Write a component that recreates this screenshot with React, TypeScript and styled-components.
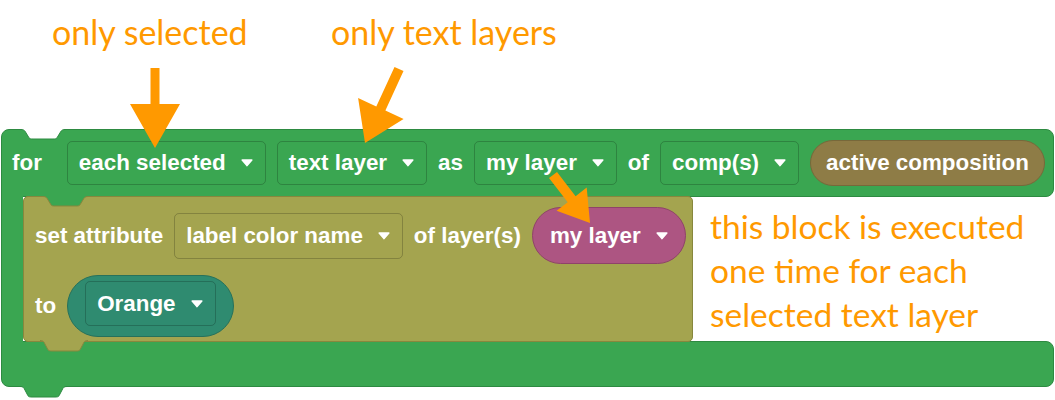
import React from 'react';
import styled, { createGlobalStyle } from 'styled-components';

const C = {
  green: '#3aa651',
  greenEdge: '#2d8a41',
  olive: '#a4a44f',
  oliveEdge: '#87873d',
  brown: '#8e7c46',
  brownEdge: '#77683a',
  pink: '#ad5582',
  pinkEdge: '#8f4369',
  teal: '#2f8b70',
  tealEdge: '#27715b',
  orange: '#ff9900',
};

const Global = createGlobalStyle`
  html, body { margin: 0; padding: 0; background: #ffffff; }
  * { box-sizing: border-box; }
`;

const Canvas = styled.div`
  position: relative;
  width: 1055px;
  height: 400px;
  overflow: hidden;
  background: #ffffff;
`;

const CalloutRow = styled.div`
  display: flex;
  height: 129px;
  padding: 10px 0 0 52px;
`;

const Callout = styled.div<{ $w?: number }>`
  width: ${(p) => (p.$w ? `${p.$w}px` : 'auto')};
  font-family: Lato, 'Open Sans', sans-serif;
  font-size: 34px;
  line-height: 44px;
  color: ${C.orange};
  white-space: nowrap;
`;

const ForBlock = styled.div`
  display: flex;
  flex-direction: column;
  width: 1053px;
  margin-left: 1px;
`;

const TopRow = styled.div`
  position: relative;
  z-index: 1;
  height: 68px;
  display: flex;
  align-items: center;
  gap: 11px;
  padding-left: 10px;
  background: ${C.green};
  border: 1px solid ${C.greenEdge};
  border-radius: 8px 8px 8px 0;
`;

const Middle = styled.div`
  position: relative;
  z-index: 2;
  display: flex;
  height: 146px;
  margin: -1px 0;
`;

const Spine = styled.div`
  width: 22px;
  background: ${C.green};
  border-left: 1px solid ${C.greenEdge};
`;

const StatementBlock = styled.div`
  position: relative;
  width: 670px;
  display: flex;
  flex-direction: column;
  gap: 11px;
  padding: 10px 0 4px 11px;
  background: ${C.olive};
  border: 1px solid ${C.oliveEdge};
  border-radius: 5px;
`;

const StatementRow = styled.div<{ $h: number }>`
  display: flex;
  align-items: center;
  gap: 11px;
  height: ${(p) => p.$h}px;
`;

const Note = styled.div`
  margin-left: 17px;
  padding-top: 8px;
  font-family: Lato, 'Open Sans', sans-serif;
  font-size: 33.5px;
  line-height: 44px;
  color: ${C.orange};
  white-space: nowrap;
`;

const BottomArm = styled.div`
  position: relative;
  z-index: 1;
  height: 46px;
  background: ${C.green};
  border: 1px solid ${C.greenEdge};
  border-radius: 0 8px 8px 8px;
`;

const Label = styled.span<{ $after?: number }>`
  font-family: 'Liberation Sans', Arial, sans-serif;
  font-weight: 700;
  font-size: 22.4px;
  color: #ffffff;
  white-space: nowrap;
  margin-right: ${(p) => p.$after ?? 0}px;
`;

const Field = styled.div<{ $h?: number }>`
  display: inline-flex;
  align-items: center;
  gap: 15px;
  height: ${(p) => p.$h ?? 44}px;
  padding: 0 12px 0 11px;
  border: 1px solid rgba(0, 0, 0, 0.2);
  border-radius: 5px;
`;

const Pill = styled.div<{ $bg: string; $edge: string; $h: number; $pad?: string }>`
  display: inline-flex;
  align-items: center;
  gap: 15px;
  height: ${(p) => p.$h}px;
  padding: ${(p) => p.$pad ?? '0 16px'};
  background: ${(p) => p.$bg};
  border: 1px solid ${(p) => p.$edge};
  border-radius: 999px;
`;

const Notch = styled.svg<{ $left: number; $top?: number; $bottom?: number }>`
  position: absolute;
  left: ${(p) => p.$left}px;
  ${(p) => (p.$top !== undefined ? `top: ${p.$top}px;` : '')}
  ${(p) => (p.$bottom !== undefined ? `bottom: ${p.$bottom}px;` : '')}
  overflow: visible;
`;

const Overlay = styled.svg`
  position: absolute;
  left: 0;
  top: 0;
  pointer-events: none;
  z-index: 5;
`;

const Caret = () => (
  <svg width="12" height="8" viewBox="0 0 12 8">
    <path d="M1.2 1 H10.8 L6 6.6 Z" fill="#fff" stroke="#fff" strokeWidth="1.6" strokeLinejoin="round" />
  </svg>
);

const Dropdown = ({ text, h }: { text: string; h?: number }) => (
  <Field $h={h}>
    <Label>{text}</Label>
    <Caret />
  </Field>
);

/* tab shape: width w, depth d, top edge at y=0 */
const tabPath = (w: number, d: number) => {
  const s = 10;
  return `M0 0.5 C2 0.5 3 1 4 2.2 L${s - 2} ${d - 1.2} C${s - 1} ${d} ${s} ${d} ${s + 2} ${d} L${w - s - 2} ${d} C${w - s} ${d} ${w - s + 1} ${d} ${w - s + 2} ${d - 1.2} L${w - 4} 2.2 C${w - 3} 1 ${w - 2} 0.5 ${w} 0.5`;
};

const Tab = ({ left, top, bottom, w, d, fill, stroke }: { left: number; top?: number; bottom?: number; w: number; d: number; fill: string; stroke: string }) => (
  <Notch $left={left} $top={top} $bottom={bottom} width={w} height={d + 1} viewBox={`0 0 ${w} ${d + 1}`}>
    <path d={`${tabPath(w, d)} L${w} 0 L0 0 Z`} fill={fill} />
    <path d={tabPath(w, d)} fill="none" stroke={stroke} strokeWidth="1" />
  </Notch>
);

type Pt = [number, number];
const arrow = (a: Pt, b: Pt, shaft: number, headLen: number, headW: number) => {
  const [x1, y1] = a;
  const [x2, y2] = b;
  const dx = x2 - x1;
  const dy = y2 - y1;
  const L = Math.hypot(dx, dy);
  const ux = dx / L;
  const uy = dy / L;
  const px = -uy;
  const py = ux;
  const bx = x2 - ux * headLen;
  const by = y2 - uy * headLen;
  const s = shaft / 2;
  const h = headW / 2;
  const pts: Pt[] = [
    [x1 + px * s, y1 + py * s],
    [bx + px * s, by + py * s],
    [bx + px * h, by + py * h],
    [x2, y2],
    [bx - px * h, by - py * h],
    [bx - px * s, by - py * s],
    [x1 - px * s, y1 - py * s],
  ];
  return pts.map((p) => `${p[0].toFixed(1)},${p[1].toFixed(1)}`).join(' ');
};

const arrows = [
  arrow([155, 68], [155, 148], 9, 44, 50),
  arrow([399, 69], [365, 143], 10, 38, 50),
  arrow([553, 175], [590, 223], 10, 30, 38),
];

export default function App() {
  return (
    <Canvas>
      <Global />
      <CalloutRow>
        <Callout $w={279}>only selected</Callout>
        <Callout>only text layers</Callout>
      </CalloutRow>

      <ForBlock>
        <TopRow>
          <Tab left={19} top={-1} w={44} d={10} fill="#ffffff" stroke={C.greenEdge} />
          <Label $after={14}>for</Label>
          <Dropdown text="each selected" />
          <Dropdown text="text layer" />
          <Label>as</Label>
          <Dropdown text="my layer" />
          <Label>of</Label>
          <Dropdown text="comp(s)" />
          <Pill $bg={C.brown} $edge={C.brownEdge} $h={46} $pad="0 15px">
            <Label>active composition</Label>
          </Pill>
        </TopRow>

        <Middle>
          <Spine />
          <StatementBlock>
            <Tab left={19} top={-1} w={45} d={10} fill={C.green} stroke={C.oliveEdge} />
            <StatementRow $h={57}>
              <Label>set attribute</Label>
              <Dropdown text="label color name" h={46} />
              <Label>of layer(s)</Label>
              <Pill $bg={C.pink} $edge={C.pinkEdge} $h={57} $pad="0 17px">
                <Label>my layer</Label>
                <Caret />
              </Pill>
            </StatementRow>
            <StatementRow $h={62}>
              <Label>to</Label>
              <Pill $bg={C.teal} $edge={C.tealEdge} $h={62} $pad="5px 17px 10px">
                <Dropdown text="Orange" h={45} />
              </Pill>
            </StatementRow>
            <Tab left={16} bottom={-11} w={48} d={11} fill={C.olive} stroke={C.oliveEdge} />
          </StatementBlock>
          <Note>
            this block is executed
            <br />
            one time for each
            <br />
            selected text layer
          </Note>
        </Middle>

        <BottomArm>
          <Tab left={18} bottom={-12} w={47} d={11} fill={C.green} stroke={C.greenEdge} />
        </BottomArm>
      </ForBlock>

      <Overlay width="1055" height="400" viewBox="0 0 1055 400">
        {arrows.map((p, i) => (
          <polygon key={i} points={p} fill={C.orange} />
        ))}
      </Overlay>
    </Canvas>
  );
}
